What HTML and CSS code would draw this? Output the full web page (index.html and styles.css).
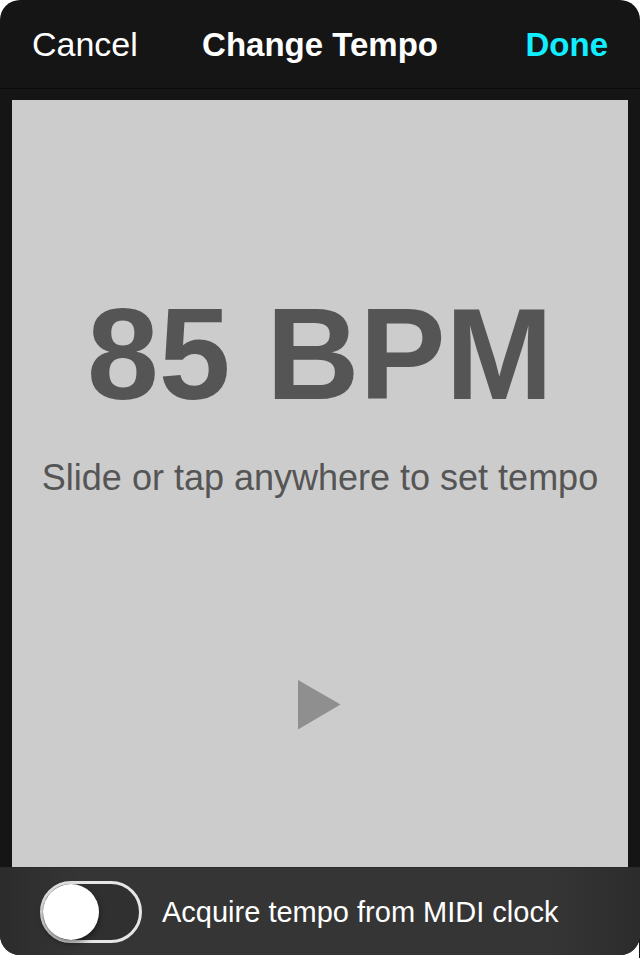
FILE: index.html
```html
<!DOCTYPE html>
<html lang="en">
<head>
<meta charset="utf-8">
<meta name="viewport" content="width=device-width, initial-scale=1">
<title>Change Tempo</title>
<link rel="stylesheet" href="styles.css">
</head>
<body>
<div class="dialog">
  <header class="bar">
    <button class="bar-button" type="button">Cancel</button>
    <h1 class="title">Change Tempo</h1>
    <button class="bar-button done" type="button">Done</button>
  </header>
  <main class="body">
    <section class="pad">
      <p class="tempo">85 BPM</p>
      <p class="hint">Slide or tap anywhere to set tempo</p>
      <button class="play" type="button" aria-label="Play">
        <svg width="44" height="50" viewBox="0 0 44 50" aria-hidden="true"><path d="M0 0 42.500 24.500 0 49.500Z" fill="#8f8f8f"/></svg>
      </button>
    </section>
  </main>
  <footer class="footer">
    <input class="switch" type="checkbox" role="switch" id="midi">
    <label class="switch-label" for="midi">Acquire tempo from MIDI clock</label>
  </footer>
</div>
</body>
</html>
```

FILE: styles.css
```css
* {
  box-sizing: border-box;
}

body {
  margin: 0;
  min-height: 100vh;
  padding-bottom: 3px;
  display: flex;
  background: linear-gradient(#151515, #151515) right bottom / 1px 20px no-repeat #fff;
  font-family: "Liberation Sans", Arial, sans-serif;
}

button {
  padding: 0;
  border: 0;
  background: none;
  font: inherit;
  color: inherit;
  cursor: pointer;
}

.dialog {
  flex: 1;
  display: flex;
  flex-direction: column;
  overflow: hidden;
  border-radius: 20px;
  background: #151515;
  color: #fff;
}

.bar {
  display: grid;
  grid-template-columns: 1fr auto 1fr;
  align-content: center;
  align-items: baseline;
  height: 89px;
  padding: 0 32px;
  border-bottom: 1px solid #0b0b0b;
  font-size: 34px;
  line-height: 40px;
}

.bar-button {
  justify-self: start;
}

.title {
  margin: 0;
  font-size: 33px;
  line-height: 40px;
  font-weight: bold;
}

.done {
  justify-self: end;
  color: #11eeff;
  font-size: 33px;
  font-weight: bold;
}

.body {
  flex: 1;
  display: flex;
  padding: 11px 12px 0;
}

.pad {
  flex: 1;
  display: flex;
  flex-direction: column;
  align-items: center;
  padding-top: 180px;
  background: #ccc;
  color: #555;
  text-align: center;
}

.tempo {
  margin: 0;
  font-size: 129px;
  line-height: 148px;
  font-weight: bold;
}

.hint {
  margin: 28px 0 0;
  font-size: 36px;
  line-height: 44px;
}

.play {
  margin-top: 180px;
}

.play svg {
  display: block;
}

.footer {
  display: flex;
  align-items: center;
  gap: 20px;
  height: 88px;
  padding: 0 40px;
  border-top: 1px solid #292929;
  background: linear-gradient(to right, #2c2c2c, #353535 80px, #353535 calc(100% - 90px), #2c2c2c);
}

.switch {
  appearance: none;
  flex: none;
  width: 102px;
  height: 62px;
  margin: 0;
  border: 3px solid #e6e6e6;
  border-radius: 31px;
  background: #303030;
  cursor: pointer;
}

.switch::before {
  content: "";
  display: block;
  width: 56px;
  height: 56px;
  border-radius: 50%;
  background: #fff;
  box-shadow: 0 3px 6px rgba(0, 0, 0, 0.5);
}

.switch:checked::before {
  margin-left: auto;
}

.switch-label {
  font-size: 29px;
  line-height: 36px;
}
```
